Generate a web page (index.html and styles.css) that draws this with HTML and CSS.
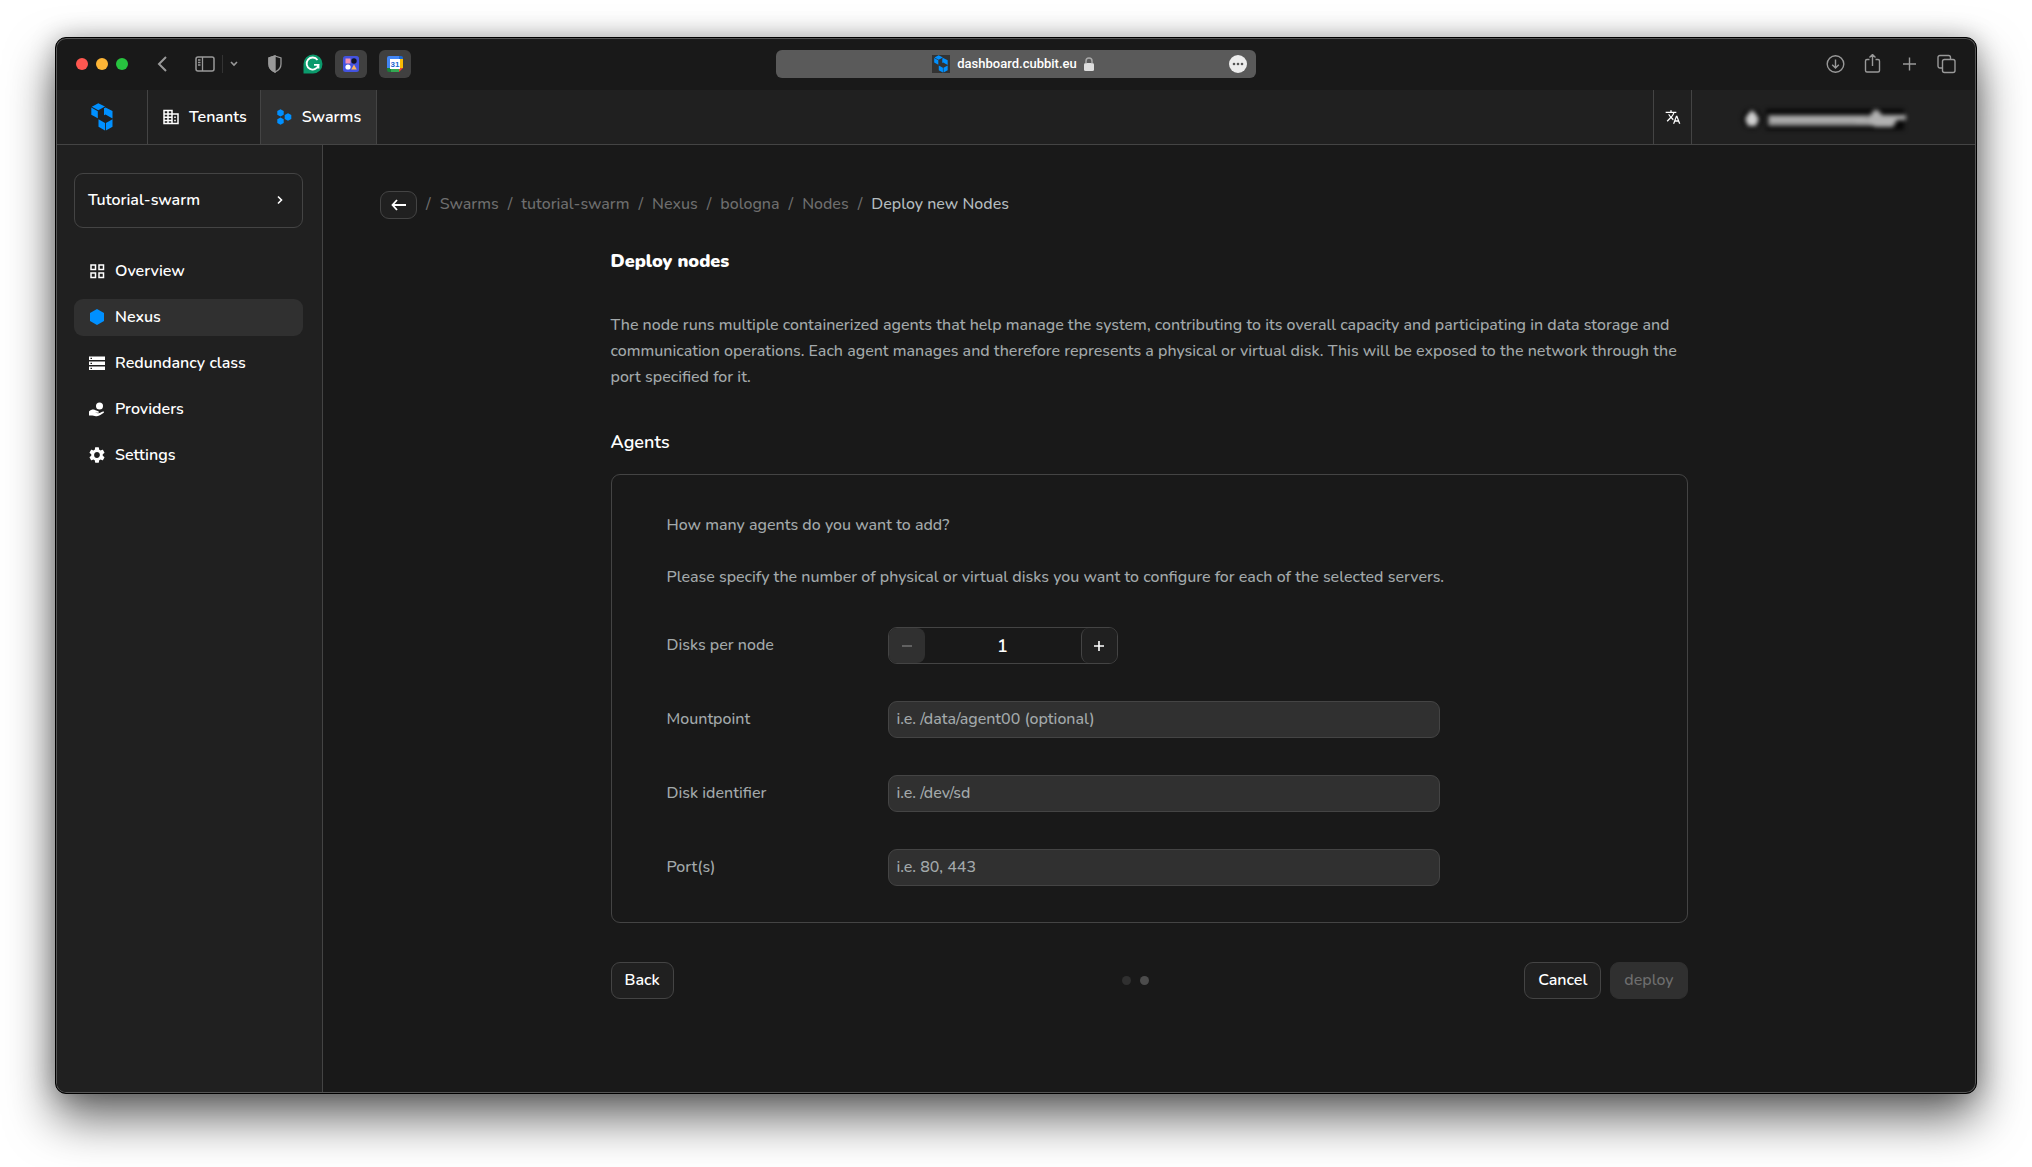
FILE: index.html
```html
<!DOCTYPE html>
<html lang="en">
<head>
    <meta charset="UTF-8">
    <meta name="viewport" content="width=device-width, initial-scale=1.0">
    <title>Deploy new Nodes</title>
    <link rel="stylesheet" href="styles.css">
</head>
<body>
    <div class="window">
        <header class="titlebar">
            <div class="titlebar-left">
                <div class="lights">
                    <span class="light red"></span>
                    <span class="light yellow"></span>
                    <span class="light green"></span>
                </div>
                <button class="tool back-tool" aria-label="Go back">
                    <svg width="10" height="16" viewBox="0 0 10 16"><path d="M9 1L2 8l7 7" stroke-width="2"/></svg>
                </button>
                <button class="tool sidebar-tool" aria-label="Show sidebar">
                    <svg width="20" height="16" viewBox="0 0 20 16"><rect x="1" y="1" width="18" height="14" rx="2" stroke-width="1.5"/><path d="M7.5 1v14M3 4h2.5M3 6.5h2.5M3 9h2.5" stroke-width="1.3"/></svg>
                </button>
                <span class="tool-divider"></span>
                <button class="tool groups-tool" aria-label="Tab groups">
                    <svg width="8" height="6" viewBox="0 0 8 6"><path d="M1 1l3 3 3-3" stroke-width="1.6"/></svg>
                </button>
                <button class="tool shield-tool" aria-label="Privacy report">
                    <svg width="16" height="18" viewBox="0 0 16 18"><path d="M8 1l6 2v6c0 4-2.5 6.5-6 8-3.500-1.5-6-4-6-8V3z" stroke-width="1.3"/><path d="M8 1v16c-3.500-1.5-6-4-6-8V3z" class="solid"/></svg>
                </button>
                <button class="tool grammar-tool" aria-label="Writing assistant">
                    <svg width="20" height="20" viewBox="0 0 20 20"><path d="M10 .5a9.500 9.500 0 0 1 0 19H.5V10A9.500 9.500 0 0 1 10 .5z" fill="#0b9a6c" stroke="none"/><path d="M14.500 6A6 6 0 1 0 15.500 10.800H11M15.500 10.500v4" stroke="#fff" stroke-width="1.8"/></svg>
                </button>
                <button class="extension" aria-label="Shapes extension">
                    <svg width="16" height="16" viewBox="0 0 16 16"><rect width="16" height="16" rx="2.5" fill="#4353e0"/><rect x="2.5" y="2.5" width="5" height="5" fill="#f391b4"/><circle cx="11" cy="5" r="2.7" fill="#111427"/><circle cx="5" cy="11" r="2.6" fill="#fff"/><path d="M11 8.500l2.800 5H8.200z" fill="#fbb55c"/></svg>
                </button>
                <button class="extension" aria-label="Calendar extension">
                    <svg width="16" height="16" viewBox="0 0 16 16"><path d="M2 0h10v3H3v9H0V2a2 2 0 0 1 2-2z" fill="#4285f4"/><path d="M12 0h2a2 2 0 0 1 2 2v2h-4z" fill="#1967d2"/><path d="M12 3h4v9h-4z" fill="#fbbc04"/><path d="M3 12h9v4H3z" fill="#34a853"/><path d="M0 12h4v4H2a2 2 0 0 1-2-2z" fill="#188038"/><path d="M12 12h4l-4 4z" fill="#ea4335"/><path d="M3 3h10v10H3z" fill="#fff"/><text x="8" y="11" text-anchor="middle" font-family="Liberation Sans, sans-serif" font-size="8" font-weight="700" fill="#1967d2">31</text></svg>
                </button>
            </div>
            <div class="address">
                <span class="site">
                    <span class="favicon"><svg width="14" height="18"><use href="#cubes"/></svg></span>
                    dashboard.cubbit.eu
                    <svg class="lock" width="10" height="14" viewBox="0 0 10 14"><rect y="6" width="10" height="8" rx="1.5"/><path d="M2 6.500V4a3 3 0 0 1 6 0v2.500" fill="none" stroke="#a9a9a9" stroke-width="1.5"/></svg>
                </span>
                <button class="more" aria-label="Page menu">
                    <svg width="18" height="18" viewBox="0 0 18 18"><circle cx="9" cy="9" r="9" fill="#ececec"/><g fill="#555"><circle cx="5" cy="9" r="1.3"/><circle cx="9" cy="9" r="1.3"/><circle cx="13" cy="9" r="1.3"/></g></svg>
                </button>
            </div>
            <div class="titlebar-right">
                <button class="tool" aria-label="Downloads">
                    <svg width="19" height="20" viewBox="0 0 19 20"><circle cx="9.5" cy="10" r="8.3"/><path d="M9.500 5.500v8.500M6.200 10.800l3.300 3.300 3.300-3.300"/></svg>
                </button>
                <button class="tool" aria-label="Share">
                    <svg width="19" height="20" viewBox="0 0 19 20"><path d="M6.500 5.500H4A1.500 1.500 0 0 0 2.500 7v9.500A1.500 1.500 0 0 0 4 18h11a1.500 1.500 0 0 0 1.500-1.500V7A1.500 1.500 0 0 0 15 5.500h-2.500M9.500 12V.500M6.500 3.500l3-3 3 3"/></svg>
                </button>
                <button class="tool" aria-label="New tab">
                    <svg width="19" height="20" viewBox="0 0 19 20"><path d="M9.500 3.500v13M3 10h13"/></svg>
                </button>
                <button class="tool" aria-label="Show all tabs">
                    <svg width="19" height="20" viewBox="0 0 19 20"><rect x="5.5" y="5.5" width="12.5" height="13" rx="2"/><path d="M5 14H3a2 2 0 0 1-2-2V3.500a2 2 0 0 1 2-2h8.500a2 2 0 0 1 2 2V5"/></svg>
                </button>
            </div>
        </header>

        <nav class="topnav">
            <a href="#" class="logo" aria-label="Home">
                <svg width="22" height="28"><use href="#cubes"/></svg>
            </a>
            <a href="#" class="tab">
                <svg width="16" height="16" viewBox="0 0 16 16" class="line-icon"><path d="M1 1.500h8v13H1zM9 5h6v9.500H9M1 5h8M1 8.200h8M1 11.500h8M5 1.500v13M11.200 8.200h1.600M11.200 11.500h1.600" stroke-width="1.5"/></svg>
                Tenants
            </a>
            <a href="#" class="tab active">
                <svg width="16" height="16" viewBox="0 0 16 16" fill="#0090ff"><path d="M4.500.3L7.700 2v3.800L4.500 7.600 1.300 5.800V2zM4.500 8.400l3.200 1.800V14l-3.200 1.800L1.300 14v-3.800zM12 4.300L15.300 6v3.900L12 11.800 8.700 9.900V6z"/></svg>
                Swarms
            </a>
            <button class="language" aria-label="Language">
                <svg width="16" height="16" viewBox="0 0 24 24" fill="#fff"><path d="M12.870 15.070l-2.540-2.510.03-.03A17.520 17.520 0 0 0 14.070 6H17V4h-7V2H8v2H1v2h11.170A15.700 15.700 0 0 1 9 11.350 15.700 15.700 0 0 1 6.690 8h-2a17.600 17.600 0 0 0 2.980 4.560l-5.090 5.020L4 19l5-5 3.110 3.110.76-2.040zM18.500 10h-2L12 22h2l1.120-3h4.750L21 22h2l-4.500-12zm-2.620 7l1.620-4.330L19.120 17z"/></svg>
            </button>
            <button class="account" aria-label="Account">
                <svg width="180" height="36" viewBox="0 0 180 36">
                    <g class="hidden-edge"><circle cx="16" cy="20" r="10"/><rect x="30" y="10" width="138" height="21"/></g>
                    <g class="hidden-name">
                        <path d="M16 11l4 4 3 5-3 7h-8l-3-7 3-5z" fill="#d0d0d0"/>
                        <rect x="32" y="16" width="106" height="11" fill="#8c8c8c"/>
                        <rect x="34" y="18" width="96" height="5"/>
                        <path d="M120 20h12l6-9h4l4 5h24v5h-9l-4 7h-18l-6-4h-13z"/>
                    </g>
                </svg>
            </button>
        </nav>

        <div class="layout">
            <aside class="sidebar">
                <button class="swarm-picker">
                    Tutorial-swarm
                    <svg width="6" height="10" viewBox="0 0 6 10" class="line-icon"><path d="M1 1.500L4.500 5 1 8.500" stroke-width="1.6"/></svg>
                </button>
                <a href="#" class="menu-item">
                    <svg width="16" height="16" viewBox="0 0 16 16" class="line-icon"><path d="M2 2h4.500v4.500H2zM10 2h4.500v4.500H10zM2 10h4.500v4.500H2zM10 10h4.500v4.500H10z" stroke-width="1.5"/></svg>
                    Overview
                </a>
                <a href="#" class="menu-item active">
                    <svg width="16" height="16" viewBox="0 0 16 16" fill="#0090ff"><path d="M8 0l7 4v8l-7 4-7-4V4z"/></svg>
                    Nexus
                </a>
                <a href="#" class="menu-item">
                    <svg width="16" height="16" viewBox="0 0 16 16" fill="#fff"><path d="M0 1.500h16v3.600H0zM0 6.500h16v3.600H0zM0 11.500h16v3.600H0z"/><path d="M1.500 2.700H3V4H1.500zM1.500 7.700H3V9H1.500zM1.500 12.700H3V14H1.500z" fill="#202020"/></svg>
                    Redundancy class
                </a>
                <a href="#" class="menu-item">
                    <svg width="16" height="16" viewBox="0 0 16 16" fill="#fff"><circle cx="10.5" cy="5" r="3.5"/><path d="M0 10.500C2 8.500 5 8 6.500 9.200l2.800 1c1 .6.600 1.700-.5 1.600l-2.800-.4 3 .9c2 .2 3.500-2 5.800-1.800.4.600.2 1-.4 1.500-2 1.500-4 3-6.500 3.200-1.500 0-3-.9-4.900-.8H0z"/></svg>
                    Providers
                </a>
                <a href="#" class="menu-item">
                    <svg width="16" height="16" viewBox="2 2 20 20" fill="#fff"><path d="M19.140 12.940c.04-.3.060-.61.060-.94 0-.32-.02-.64-.07-.94l2.030-1.580a.49.490 0 0 0 .12-.61l-1.920-3.320a.488.488 0 0 0-.59-.22l-2.390.96c-.5-.38-1.030-.7-1.620-.94l-.36-2.540a.484.484 0 0 0-.48-.41h-3.840c-.24 0-.43.170-.47.410l-.36 2.540c-.59.240-1.130.570-1.620.94l-2.390-.96c-.22-.08-.47 0-.59.220L2.740 8.870c-.12.210-.08.470.12.610l2.030 1.580c-.05.300-.09.630-.09.940s.02.640.07.940l-2.030 1.580a.49.490 0 0 0-.12.610l1.920 3.320c.12.220.370.290.59.220l2.390-.96c.5.380 1.030.7 1.620.94l.36 2.540c.05.240.24.410.48.410h3.840c.24 0 .44-.17.47-.41l.36-2.540c.59-.24 1.130-.56 1.620-.94l2.390.96c.22.080.47 0 .59-.22l1.920-3.320c.12-.22.070-.47-.12-.61l-2.010-1.580zM12 15.600A3.610 3.610 0 0 1 8.400 12c0-1.980 1.620-3.600 3.600-3.600s3.600 1.620 3.600 3.600-1.620 3.600-3.600 3.600z"/></svg>
                    Settings
                </a>
            </aside>

            <main class="content">
                <nav class="breadcrumb">
                    <a href="#" class="back-link" aria-label="Back">
                        <svg width="16" height="12" viewBox="0 0 16 12" class="line-icon"><path d="M6 1L1.500 6 6 11M1.500 6H15" stroke-width="1.8"/></svg>
                    </a>
                    <div class="crumbs">
                        <span>/</span><a href="#">Swarms</a>
                        <span>/</span><a href="#">tutorial-swarm</a>
                        <span>/</span><a href="#">Nexus</a>
                        <span>/</span><a href="#">bologna</a>
                        <span>/</span><a href="#">Nodes</a>
                        <span>/</span><a href="#" class="current">Deploy new Nodes</a>
                    </div>
                </nav>

                <form class="deploy">
                    <h1>Deploy nodes</h1>
                    <p class="intro">The node runs multiple containerized agents that help manage the system, contributing to its overall capacity and participating in data storage and communication operations. Each agent manages and therefore represents a physical or virtual disk. This will be exposed to the network through the port specified for it.</p>
                    <h2>Agents</h2>
                    <section class="card">
                        <p>How many agents do you want to add?</p>
                        <p>Please specify the number of physical or virtual disks you want to configure for each of the selected servers.</p>
                        <div class="field">
                            <label for="disks">Disks per node</label>
                            <div class="stepper">
                                <button type="button" class="step" aria-label="Remove disk" disabled>
                                    <svg width="12" height="12" viewBox="0 0 12 12" class="line-icon"><path d="M1 6h10" stroke-width="1.6"/></svg>
                                </button>
                                <input type="text" id="disks" value="1">
                                <button type="button" class="step" aria-label="Add disk">
                                    <svg width="12" height="12" viewBox="0 0 12 12" class="line-icon"><path d="M1 6h10M6 1v10" stroke-width="1.6"/></svg>
                                </button>
                            </div>
                        </div>
                        <div class="field">
                            <label for="mountpoint">Mountpoint</label>
                            <input type="text" id="mountpoint" class="text-input" placeholder="i.e. /data/agent00 (optional)">
                        </div>
                        <div class="field">
                            <label for="identifier">Disk identifier</label>
                            <input type="text" id="identifier" class="text-input" placeholder="i.e. /dev/sd">
                        </div>
                        <div class="field">
                            <label for="ports">Port(s)</label>
                            <input type="text" id="ports" class="text-input" placeholder="i.e. 80, 443">
                        </div>
                    </section>
                    <div class="actions">
                        <div class="actions-left"><button type="button" class="btn">Back</button></div>
                        <div class="dots"><span class="dot"></span><span class="dot current"></span></div>
                        <div class="actions-right">
                            <button type="button" class="btn">Cancel</button>
                            <button type="submit" class="btn" disabled>deploy</button>
                        </div>
                    </div>
                </form>
            </main>
        </div>
    </div>

    <!-- shared logo -->
    <svg class="sprite" width="0" height="0">
        <symbol id="cubes" viewBox="0 0 22 28">
            <g fill="#0090ff">
                <path d="M7.300.3l6.700 3.300-6.700 3.700L.8 3.800z"/>
                <path d="M.3 4.600l6.500 3.600v7L.3 11.800z"/>
                <path d="M14.500 4.400l7 3.700v7.300l-7-3.800-1.500.7V5.300z"/>
                <path d="M7.500 16.300l6.500 3.600v7.500l-6.500-3.600z"/>
                <path d="M21.500 16.300v7.500l-6.600 3.600v-7.500z"/>
            </g>
        </symbol>
    </svg>
</body>
</html>
```

FILE: styles.css
```css
* {
    box-sizing: border-box;
}
body {
    margin: 0;
    min-height: 100vh;
    padding: 37px 55px 73px;
    background-color: #fff;
    color: #fff;
    font-family: Nunito, Lato, sans-serif;
    font-size: 16px;
    font-weight: 500;
    line-height: 26px;
    display: flex;
    overflow: hidden;
}
a {
    color: inherit;
    text-decoration: none;
}
button, input {
    font: inherit;
    color: inherit;
}
button {
    padding: 0;
    border: none;
    background: none;
    cursor: pointer;
}
svg {
    display: block;
    flex-shrink: 0;
}
h1, h2, p {
    margin: 0;
}
.sprite {
    position: absolute;
}
.line-icon {
    fill: none;
    stroke: currentColor;
}
.window {
    flex: 1;
    display: flex;
    flex-direction: column;
    border: 1px solid #000;
    border-radius: 11px;
    background-color: #191919;
    box-shadow: inset 0 0 0 1px #555, 0 24px 48px rgba(0, 0, 0, 0.6), 0 0 24px rgba(0, 0, 0, 0.25);
    padding: 1px;
}

/* browser bar */
.titlebar {
    display: grid;
    grid-template-columns: 1fr 480px 1fr;
    align-items: center;
    height: 51px;
    padding: 0 19px 2px;
}
.titlebar-left, .titlebar-right, .lights {
    display: flex;
    align-items: center;
}
.titlebar-right {
    justify-content: flex-end;
    gap: 18px;
}
.lights {
    gap: 8px;
}
.light {
    width: 12px;
    height: 12px;
    border-radius: 50%;
}
.red {
    background-color: #ff5750;
}
.yellow {
    background-color: #fdb536;
}
.green {
    background-color: #27c33f;
}
.tool svg {
    fill: none;
    stroke: #999;
    stroke-width: 1.4;
}
.tool .solid {
    fill: #999;
}
.back-tool {
    margin-left: 29px;
}
.sidebar-tool {
    margin-left: 28px;
}
.tool-divider {
    width: 1px;
    height: 18px;
    margin: 0 7px;
    background-color: #333;
}
.shield-tool {
    margin-left: 29px;
}
.grammar-tool {
    margin-left: 20px;
}
.extension {
    display: flex;
    align-items: center;
    justify-content: center;
    width: 32px;
    height: 28px;
    margin-left: 12px;
    border-radius: 6px;
    background-color: #404040;
}
.address {
    display: flex;
    align-items: center;
    height: 28px;
    padding: 0 9px;
    border-radius: 6px;
    background-color: #5a5a5a;
}
.site {
    flex: 1;
    display: flex;
    align-items: center;
    justify-content: center;
    gap: 7px;
    padding-left: 12px;
    font-family: Roboto, sans-serif;
    font-size: 13px;
}
.favicon {
    display: flex;
    align-items: center;
    justify-content: center;
    width: 18px;
    height: 18px;
    background-color: #333;
}
.lock {
    fill: #dedede;
}

/* top navigation */
.topnav {
    display: flex;
    height: 55px;
    border-bottom: 1px solid #444;
    background-color: #202020;
    font-weight: 600;
}
.logo, .tab, .language {
    display: flex;
    align-items: center;
    justify-content: center;
    border-right: 1px solid #444;
}
.logo {
    width: 91px;
}
.tab {
    gap: 10px;
    padding: 0 13px 0 15px;
}
.tab.active {
    padding-right: 15px;
    background-color: #303030;
}
.language {
    width: 39px;
    margin-left: auto;
    border-left: 1px solid #444;
}
.account {
    width: 283px;
    padding-left: 44px;
}
.hidden-edge {
    fill: #080808;
    filter: blur(2px);
}
.hidden-name {
    fill: #b0b0b0;
    filter: blur(2px);
}

/* page */
.layout {
    flex: 1;
    display: flex;
}
.sidebar {
    display: flex;
    flex-direction: column;
    gap: 9px;
    width: 266px;
    padding: 28px 19px 28px 17px;
    border-right: 1px solid #444;
    border-bottom-left-radius: 9px;
    background-color: #202020;
    font-weight: 600;
}
.swarm-picker {
    display: flex;
    align-items: center;
    justify-content: space-between;
    height: 55px;
    margin-bottom: 16px;
    padding: 0 19px 2px 13px;
    border: 1px solid #444;
    border-radius: 9px;
}
.menu-item {
    display: flex;
    align-items: center;
    gap: 10px;
    height: 37px;
    padding: 0 15px 2px;
    border-radius: 9px;
}
.menu-item.active {
    background-color: #303030;
}
.content {
    flex: 1;
    padding: 46px 57px;
}
.breadcrumb, .crumbs {
    display: flex;
    align-items: center;
    gap: 9px;
    color: #6e6e6e;
}
.crumbs {
    padding-bottom: 2px;
}
.crumbs .current {
    color: #b4bcbf;
}
.back-link {
    display: flex;
    align-items: center;
    justify-content: center;
    width: 37px;
    height: 28px;
    border: 1px solid #444;
    border-radius: 9px;
    background-color: #202020;
    color: #fff;
}
.deploy {
    max-width: 1077px;
    margin: 29px auto 0;
    color: #a3a9ab;
}
h1 {
    font-size: 18px;
    font-weight: 900;
    line-height: 26px;
    color: #fff;
}
.intro {
    margin-top: 38px;
}
h2 {
    margin-top: 39px;
    font-size: 18px;
    font-weight: 600;
    line-height: 26px;
    color: #fff;
}
.card {
    margin-top: 19px;
    padding: 37px 55px 36px;
    border: 1px solid #444;
    border-radius: 9px;
}
.card p {
    margin-bottom: 26px;
}
.field {
    display: flex;
    align-items: center;
    margin-top: 37px;
}
.field label {
    width: 221px;
    padding-bottom: 2px;
}
.text-input {
    flex: 1;
    max-width: 552px;
    height: 37px;
    padding: 0 8px 2px;
    border: 1px solid #444;
    border-radius: 9px;
    background-color: #303030;
}
.text-input::placeholder {
    color: #a3a9ab;
    opacity: 1;
}
.stepper {
    display: flex;
    width: 230px;
    height: 37px;
    border: 1px solid #444;
    border-radius: 9px;
    color: #fff;
}
.stepper input {
    flex: 1;
    min-width: 0;
    padding: 0;
    border: none;
    background: none;
    text-align: center;
    font-size: 18px;
    font-weight: 600;
}
.step {
    display: flex;
    align-items: center;
    justify-content: center;
    width: 36px;
    border-left: 1px solid #444;
    border-radius: 8px;
    background-color: #202020;
}
.step:disabled {
    border: none;
    background-color: #303030;
    color: #6e6e6e;
}
.actions {
    display: flex;
    align-items: center;
    margin-top: 39px;
}
.actions-left, .actions-right {
    flex: 1;
    display: flex;
    gap: 9px;
}
.actions-right {
    justify-content: flex-end;
}
.btn {
    height: 37px;
    padding: 0 13px 2px;
    border: 1px solid #444;
    border-radius: 9px;
    background-color: #202020;
    color: #fff;
    font-weight: 600;
}
.btn:disabled {
    border-color: #303030;
    background-color: #303030;
    color: #6e6e6e;
    font-weight: 500;
}
.dots {
    display: flex;
    gap: 9px;
    padding-right: 28px;
}
.dot {
    width: 9px;
    height: 9px;
    border-radius: 50%;
    background-color: #303030;
}
.dot.current {
    background-color: #4c4c4c;
}
```
